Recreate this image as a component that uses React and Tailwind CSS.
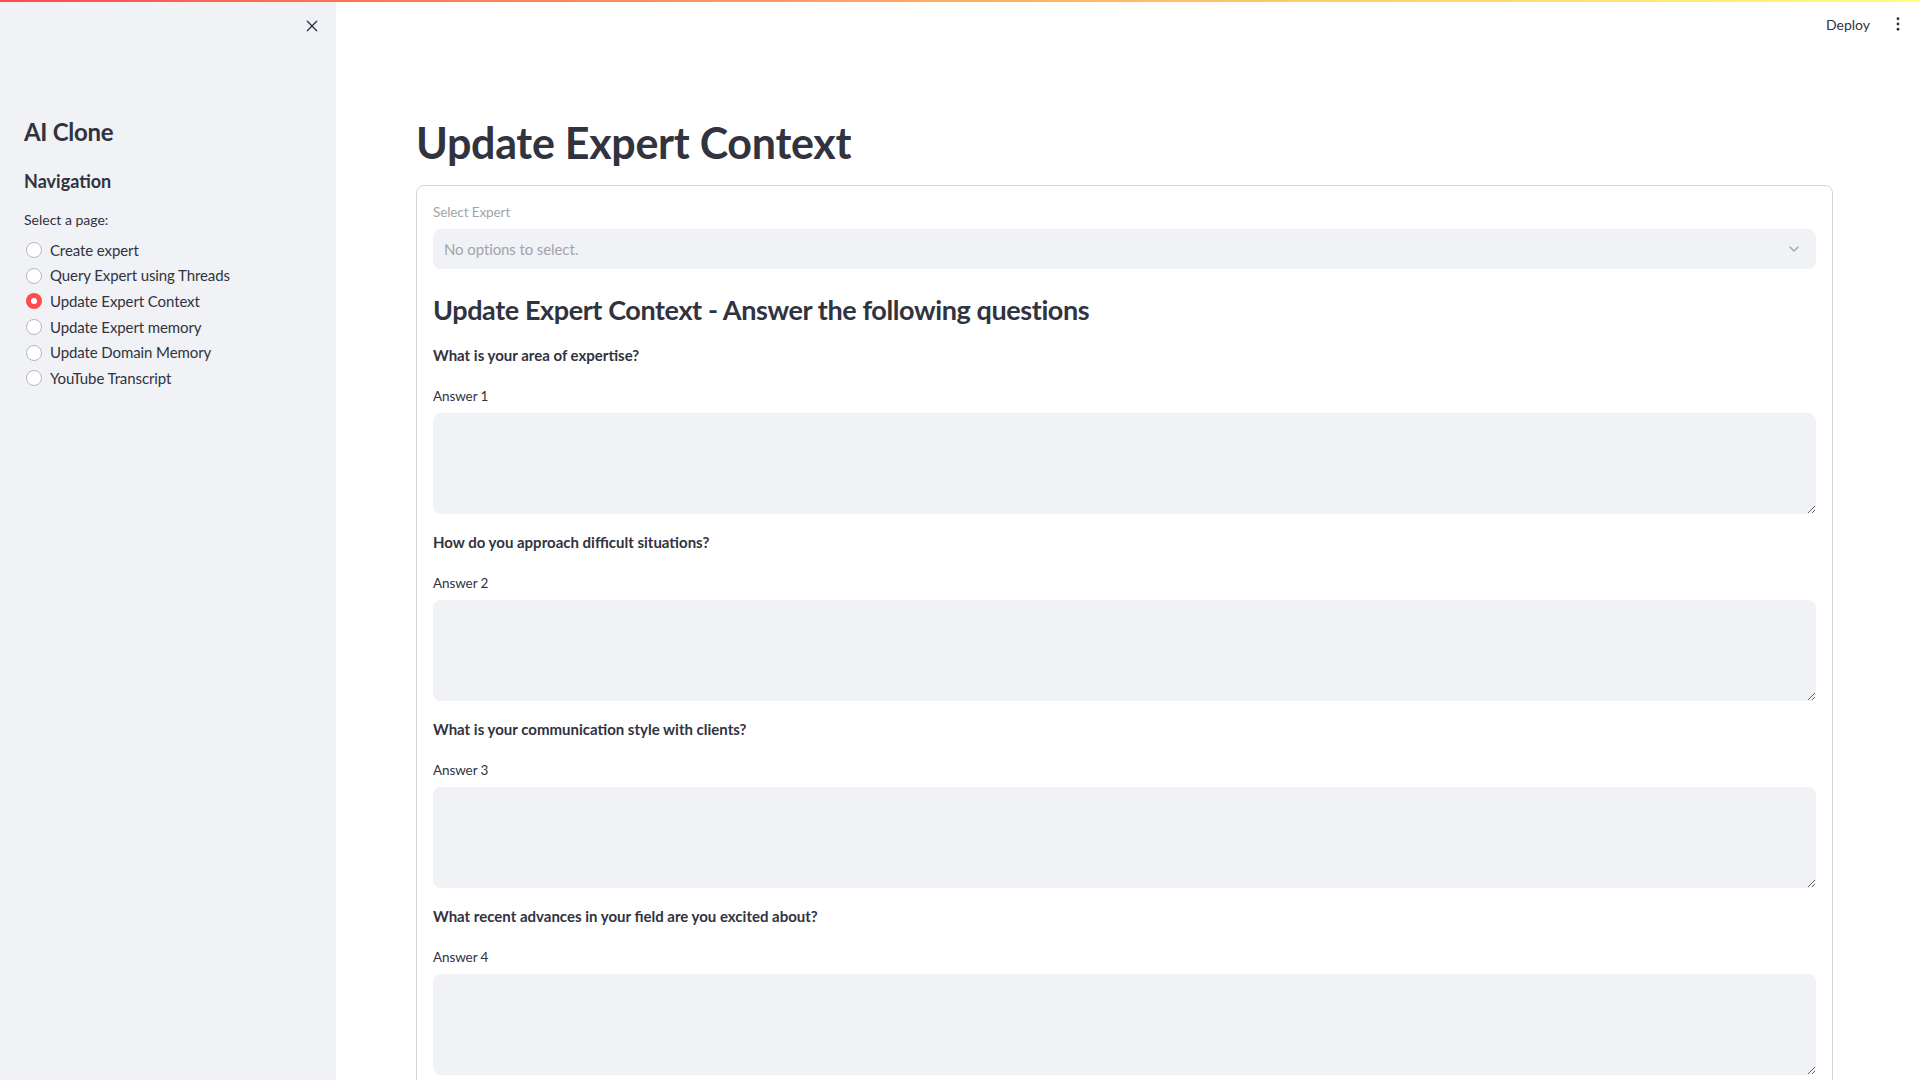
import React, { useState } from 'react';

const pages = [
  'Create expert',
  'Query Expert using Threads',
  'Update Expert Context',
  'Update Expert memory',
  'Update Domain Memory',
  'YouTube Transcript',
];

const questions = [
  'What is your area of expertise?',
  'How do you approach difficult situations?',
  'What is your communication style with clients?',
  'What recent advances in your field are you excited about?',
];

function Sidebar({ page, setPage }) {
  return (
    <aside className="w-[336px] shrink-0 h-full bg-[#f0f2f6] relative">
      {/* close sidebar */}
      <button className="absolute left-[304px] top-[18px] w-4 h-4 flex items-center justify-center text-[#31333f]">
        <svg viewBox="0 0 24 24" className="w-[16px] h-[16px]" fill="none" stroke="currentColor" strokeWidth="2" strokeLinecap="round">
          <path d="M5 5l14 14M19 5L5 19" />
        </svg>
      </button>
      <div className="pt-[116px] px-6">
        <h1 className="text-[24px] leading-[32px] font-bold tracking-[-0.3px]">AI Clone</h1>
        <h3 className="mt-[19px] text-[18px] leading-[28px] font-bold">Navigation</h3>
        <div className="mt-[14px] text-[14px] leading-[22px]">Select a page:</div>
        <div className="mt-[6px] flex flex-col">
          {pages.map((p) => (
            <label key={p} className="flex items-center h-[25.7px] cursor-pointer" onClick={() => setPage(p)}>
              {page === p ? (
                <span className="w-4 h-4 rounded-full bg-[#ff4b4b] flex items-center justify-center ml-[2px]">
                  <span className="w-[6px] h-[6px] rounded-full bg-white" />
                </span>
              ) : (
                <span className="w-4 h-4 rounded-full border border-[#b8b9c0] bg-white ml-[2px]" />
              )}
              <span className="ml-[8px] text-[15px] tracking-[-0.1px]">{p}</span>
            </label>
          ))}
        </div>
      </div>
    </aside>
  );
}

function Question({ q, i }) {
  return (
    <div>
      <p className="mt-[16px] text-[15px] leading-[24px] font-bold">{q}</p>
      <div className="mt-[18px] text-[13.5px] leading-[22px] tracking-[-0.1px]">Answer {i + 1}</div>
      <textarea className="mt-[6px] block w-full h-[101px] rounded-lg bg-[#f0f2f6] resize-y outline-none px-4 py-3 text-[15px]" />
    </div>
  );
}

export default function App() {
  const [page, setPage] = useState('Update Expert Context');
  return (
    <div className="h-screen w-full overflow-hidden flex text-[#31333f] bg-white relative" style={{ fontFamily: 'Lato, "Noto Sans", sans-serif' }}>
      <div className="absolute top-0 left-0 right-0 h-[2px] bg-gradient-to-r from-[#ff4b4b] to-[#fffd80] z-10" />
      <Sidebar page={page} setPage={setPage} />
      <main className="flex-1 h-full overflow-hidden relative">
        <div className="absolute right-0 top-0 h-[48px] flex items-center pr-[20px]">
          <span className="text-[14px] mr-[26px]">Deploy</span>
          <svg viewBox="0 0 4 16" className="w-[4px] h-[14px]" fill="#31333f">
            <circle cx="2" cy="2" r="1.6" />
            <circle cx="2" cy="8" r="1.6" />
            <circle cx="2" cy="14" r="1.6" />
          </svg>
        </div>
        <div className="pl-[80px] pr-[87px] pt-[117px]">
          <h1 className="text-[43px] leading-[52px] font-bold tracking-[-0.3px]">Update Expert Context</h1>
          <div className="mt-[16px] border border-[#d6d6d9] rounded-lg p-4 pb-10">
            <div className="text-[13.5px] leading-[21px] text-[#a3a4ab] tracking-[-0.1px]">Select Expert</div>
            <div className="mt-[6px] h-[40px] rounded-lg bg-[#f0f2f6] flex items-center justify-between pl-[11px] pr-[14px]">
              <span className="text-[15px] text-[#a3a4ab] tracking-[-0.1px]">No options to select.</span>
              <svg viewBox="0 0 24 24" className="w-[16px] h-[16px]" fill="none" stroke="#a3a4ab" strokeWidth="2" strokeLinecap="round" strokeLinejoin="round">
                <path d="M6 9l6 6 6-6" />
              </svg>
            </div>
            <h3 className="mt-[24px] text-[27px] leading-[34px] font-bold tracking-[-0.4px]">Update Expert Context - Answer the following questions</h3>
            {questions.map((q, i) => (
              <Question key={q} q={q} i={i} />
            ))}
          </div>
        </div>
      </main>
    </div>
  );
}
